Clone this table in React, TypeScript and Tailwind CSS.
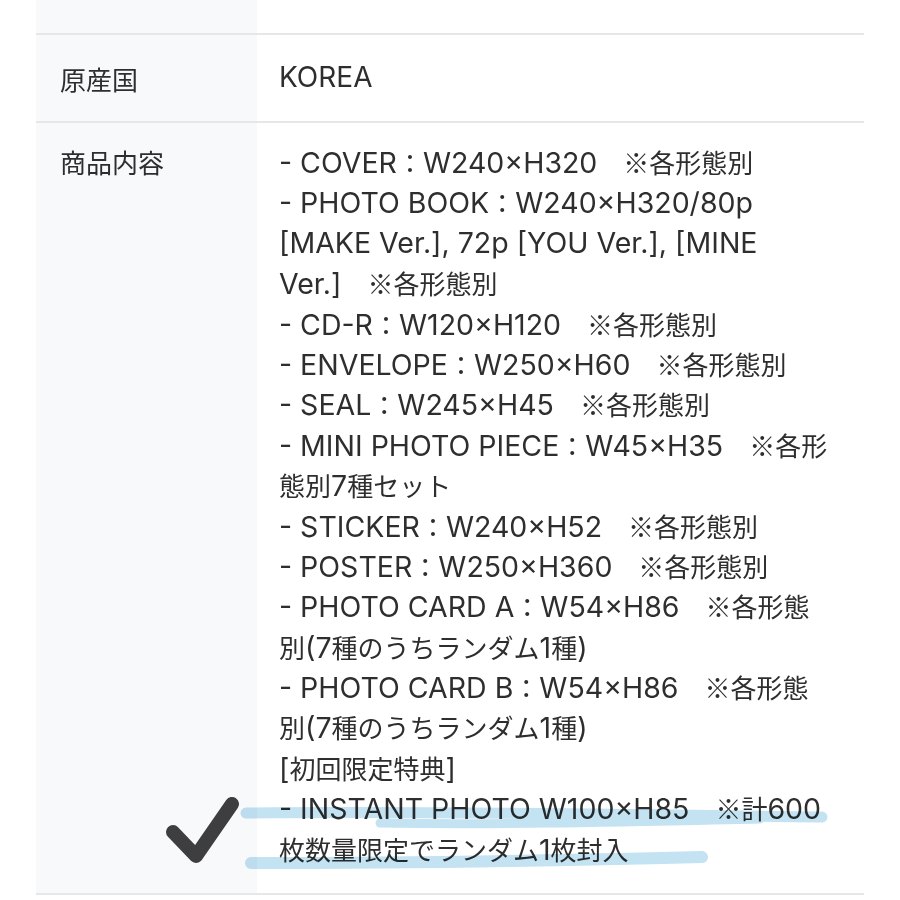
import React from "react";

const lines: string[] = [
  "- COVER：W240×H320　※各形態別",
  "- PHOTO BOOK：W240×H320/80p",
  "[MAKE Ver.], 72p [YOU Ver.], [MINE",
  "Ver.]　※各形態別",
  "- CD-R：W120×H120　※各形態別",
  "- ENVELOPE：W250×H60　※各形態別",
  "- SEAL：W245×H45　※各形態別",
  "- MINI PHOTO PIECE：W45×H35　※各形",
  "態別7種セット",
  "- STICKER：W240×H52　※各形態別",
  "- POSTER：W250×H360　※各形態別",
  "- PHOTO CARD A：W54×H86　※各形態",
  "別(7種のうちランダム1種)",
  "- PHOTO CARD B：W54×H86　※各形態",
  "別(7種のうちランダム1種)",
  "[初回限定特典]",
  "- INSTANT PHOTO W100×H85　※計600",
  "枚数量限定でランダム1枚封入",
];

const CJK = /([\u203b\u3000-\u30ff\u4e00-\u9fff\uff00-\uffef]+)/;

function Mixed({ text }: { text: string }) {
  const parts = text.split(CJK).filter((p) => p.length > 0);
  return (
    <>
      {parts.map((p, i) =>
        CJK.test(p) ? (
          <span key={i} className="font-['Noto_Sans_CJK_JP',sans-serif] text-[26px]">
            {p}
          </span>
        ) : (
          <span key={i} className="font-['Inter','Noto_Sans_CJK_JP',sans-serif] text-[28.5px]">
            {p}
          </span>
        )
      )}
    </>
  );
}

export default function App() {
  return (
    <div className="relative w-[900px] h-[900px] overflow-hidden bg-white text-[#2e2e2e] font-['Inter','Noto_Sans_CJK_JP',sans-serif]">
      <svg
        className="absolute left-0 top-0 pointer-events-none z-20 mix-blend-multiply"
        width="900"
        height="900"
        viewBox="0 0 900 900"
      >
        <g stroke="#c3e2f2" strokeLinecap="round" fill="none">
          <path d="M246 813 C 400 811, 620 814, 822 817" strokeWidth="11" />
          <path d="M380 823 C 500 825, 620 822, 760 819" strokeWidth="9" />
          <path d="M251 863 C 420 863, 580 860, 702 857" strokeWidth="12" />
        </g>
        <path
          d="M173 832 L196 856 L232 804"
          stroke="#3f3f42"
          strokeWidth="14"
          strokeLinecap="round"
          strokeLinejoin="round"
          fill="none"
        />
      </svg>

      <div className="relative z-10 ml-[36px] w-[828px]">
        <div className="flex h-[33px]">
          <div className="w-[221px] bg-[#f8f9fb]" />
          <div className="flex-1" />
        </div>
        <div className="h-[2px] bg-[#e6e7e9]" />
        <div className="flex h-[86px]">
          <div className="w-[221px] bg-[#f8f9fb] pl-[24px] flex items-center font-['Noto_Sans_CJK_JP',sans-serif] text-[26px]">
            原産国
          </div>
          <div className="flex-1 pl-[22px] flex items-center text-[28px] pb-[2px]">KOREA</div>
        </div>
        <div className="h-[2px] bg-[#e6e7e9]" />
        <div className="flex h-[770px] leading-[40.4px]">
          <div className="w-[221px] bg-[#f8f9fb] pl-[24px] pt-[19px] font-['Noto_Sans_CJK_JP',sans-serif] text-[26px]">
            商品内容
          </div>
          <div className="flex-1 pl-[22px] pt-[19px]">
            {lines.map((l, i) => (
              <div key={i} className="whitespace-nowrap h-[40.4px] leading-[40.4px]">
                <Mixed text={l} />
              </div>
            ))}
          </div>
        </div>
        <div className="h-[2px] bg-[#e6e7e9]" />
      </div>
    </div>
  );
}
